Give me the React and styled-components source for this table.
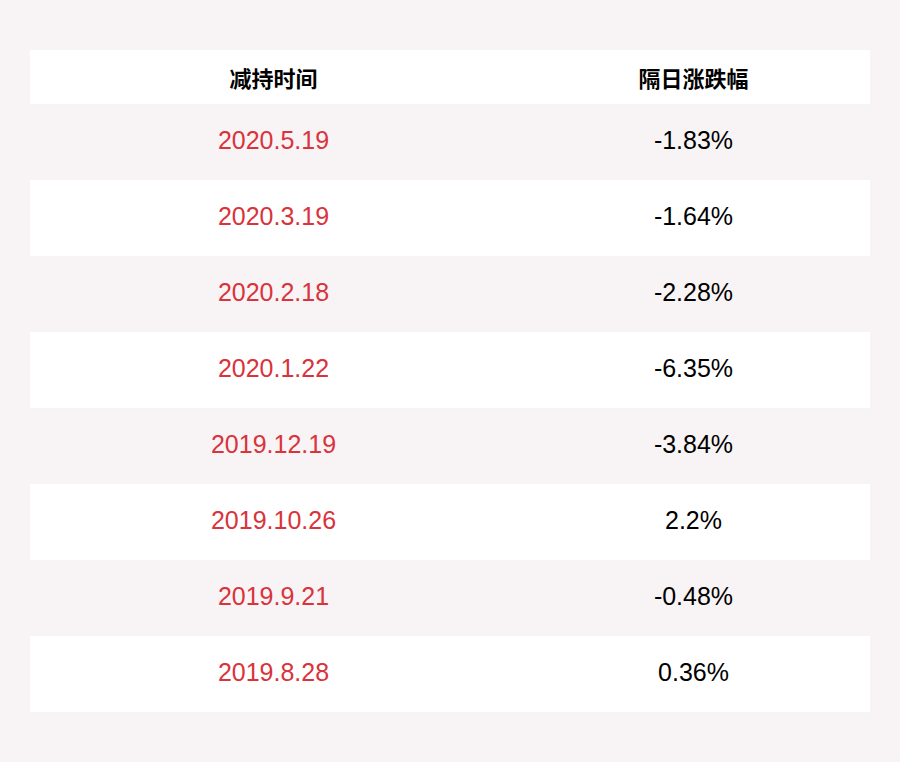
import React from 'react'
import styled, { createGlobalStyle } from 'styled-components'

const GlobalStyle = createGlobalStyle`
  html, body {
    margin: 0;
    padding: 0;
    background: #f8f4f5;
  }
  body {
    font-family: "Liberation Sans", Arial, "Noto Sans CJK SC", sans-serif;
  }
`

const Page = styled.div`
  padding: 50px 30px;
  box-sizing: border-box;
  width: 900px;
  min-height: 762px;
`

const Table = styled.div`
  display: flex;
  flex-direction: column;
`

const Row = styled.div`
  display: grid;
  grid-template-columns: 487px 353px;
  height: ${p => (p.head ? 54 : 76)}px;
  background: ${p => (p.striped ? '#ffffff' : 'transparent')};
`

const Cell = styled.div`
  display: flex;
  align-items: center;
  justify-content: center;
  padding-bottom: ${p => (p.head ? 0 : 3)}px;
  font-size: ${p => (p.head ? 22 : 25)}px;
  font-weight: ${p => (p.head ? 700 : 400)};
  color: ${p => (p.red ? '#d9333b' : '#000')};
  font-family: ${p => (p.head
    ? '"Noto Sans CJK SC", "Liberation Sans", sans-serif'
    : '"Liberation Sans", Arial, sans-serif')};
`

const rows = [
  { date: '2020.5.19', change: '-1.83%' },
  { date: '2020.3.19', change: '-1.64%' },
  { date: '2020.2.18', change: '-2.28%' },
  { date: '2020.1.22', change: '-6.35%' },
  { date: '2019.12.19', change: '-3.84%' },
  { date: '2019.10.26', change: '2.2%' },
  { date: '2019.9.21', change: '-0.48%' },
  { date: '2019.8.28', change: '0.36%' }
]

export default function App() {
  return (
    <>
      <GlobalStyle />
      <Page>
        <Table>
          <Row head striped>
            <Cell head>减持时间</Cell>
            <Cell head>隔日涨跌幅</Cell>
          </Row>
          {rows.map((r, i) => (
            <Row key={r.date} striped={i % 2 === 1}>
              <Cell red>{r.date}</Cell>
              <Cell>{r.change}</Cell>
            </Row>
          ))}
        </Table>
      </Page>
    </>
  )
}
